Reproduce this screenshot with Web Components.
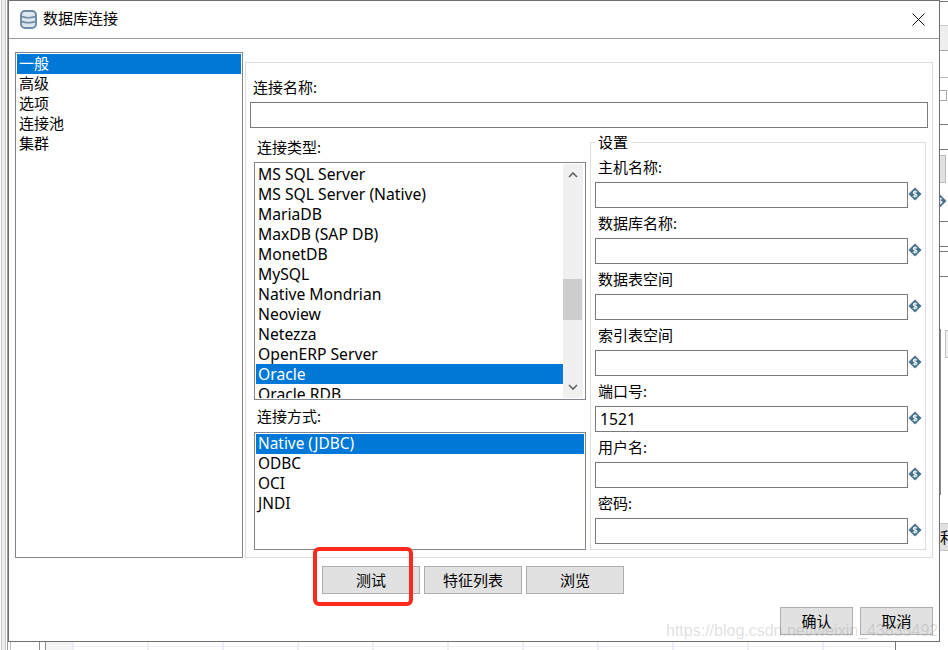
<!DOCTYPE html>
<html lang="zh">
<head>
<meta charset="utf-8">
<title>数据库连接</title>
<style>
html, body { margin: 0; height: 100%; background: #fff; overflow: hidden; }
body { font: 15px "Noto Sans", "Noto Sans CJK SC", sans-serif; color: #000; }
</style>
</head>
<body>
<desk-top>
	<db-dialog heading="数据库连接">
		<list-box slot="nav" raised items="一般,高级,选项,连接池,集群" selected="0"></list-box>
		<text-field slot="name" label="连接名称:"></text-field>
		<list-box slot="types" latin scrollbar selected="10" thumb-top="115" thumb-height="41"
			items="MS SQL Server,MS SQL Server (Native),MariaDB,MaxDB (SAP DB),MonetDB,MySQL,Native Mondrian,Neoview,Netezza,OpenERP Server,Oracle,Oracle RDB"></list-box>
		<list-box slot="methods" latin raised selected="0" items="Native (JDBC),ODBC,OCI,JNDI"></list-box>
		<param-field slot="settings" label="主机名称:"></param-field>
		<param-field slot="settings" label="数据库名称:"></param-field>
		<param-field slot="settings" label="数据表空间"></param-field>
		<param-field slot="settings" label="索引表空间"></param-field>
		<param-field slot="settings" label="端口号:" value="1521"></param-field>
		<param-field slot="settings" label="用户名:"></param-field>
		<param-field slot="settings" label="密码:"></param-field>
		<win-button slot="actions">测试</win-button>
		<win-button slot="actions">特征列表</win-button>
		<win-button slot="actions">浏览</win-button>
		<win-button slot="footer" small>确认</win-button>
		<win-button slot="footer" small>取消</win-button>
	</db-dialog>
</desk-top>

<script>
const FONT = '"Noto Sans", "Noto Sans CJK SC", sans-serif'

const VAR_ICON = `<svg viewBox="0 0 14 14" width="14" height="14" aria-hidden="true">
	<path d="M7 .5 13.5 7 7 13.5 .5 7Z" fill="#44708f"/>
	<path d="M9.1 5.1C8.4 4.3 5.2 4.2 5.2 5.7 5.2 7.2 9 6.8 9 8.3 9 9.8 5.6 9.6 4.9 8.8M7 3.4V10.6" fill="none" stroke="#fff" stroke-width="1.1"/>
</svg>`

class DeskTop extends HTMLElement {
	constructor() {
		super()
		this.attachShadow({ mode: 'open' }).innerHTML = `
			<style>
				:host { display: block; position: relative; width: 948px; height: 650px; overflow: hidden; background: #fff; }
				.bit { position: absolute; }
				.v { width: 1px; }
				.h { left: 940px; width: 8px; height: 1px; }
				.window { position: absolute; left: 8px; top: 0; }
				.clip { left: 940px; top: 523px; width: 8px; height: 28px; overflow: hidden; background: #e1e1e1; border: 1px solid #c4c4c4; border-width: 1px 0; box-sizing: border-box; font: 15px/26px ${FONT}; white-space: nowrap; }
				.grid { left: 72px; top: 642px; width: 823px; height: 8px; background:
					linear-gradient(#eceef6, #eceef6) 0 4px / 100% 1px no-repeat,
					repeating-linear-gradient(90deg, #eceef6 0 2px, transparent 2px 75px); }
			</style>
			<!-- what shows of the main window behind the dialog -->
			<div class="bit" style="left:1px;top:0;width:5px;height:650px;background:#eee;border:1px solid #c8c8c8;border-width:0 1px;box-sizing:border-box"></div>
			<div class="bit v" style="left:7px;top:0;height:650px;background:#9a9a9a"></div>
			<div class="bit v" style="left:10px;top:642px;height:8px;background:#c0c0c0"></div>
			<div class="bit v" style="left:39px;top:642px;height:8px;background:#8a8a8a"></div>
			<div class="bit v" style="left:45px;top:642px;height:8px;background:#8a8a8a"></div>
			<div class="bit" style="left:46px;top:642px;width:26px;height:8px;background:#f4f4f4"></div>
			<div class="bit grid"></div>
			<div class="bit v" style="left:895px;top:642px;height:8px;background:#777"></div>
			<div class="bit h" style="top:1px;background:#777"></div>
			<div class="bit h" style="top:25px;background:#ccc"></div>
			<div class="bit" style="left:940px;top:26px;width:8px;height:24px;background:#eee"></div>
			<div class="bit h" style="top:50px;background:#aaa"></div>
			<div class="bit h" style="top:77px;background:#bbb"></div>
			<div class="bit" style="left:940px;top:90px;width:7px;height:11px;border:1px solid #aaa;border-left:0;box-sizing:border-box"></div>
			<div class="bit h" style="top:124px;background:#777"></div>
			<div class="bit h" style="top:149px;background:#777"></div>
			<div class="bit" style="left:940px;top:155px;width:6px;height:28px;background:#e1e1e1;border:1px solid #bbb;border-left:0;box-sizing:border-box"></div>
			<div class="bit" style="left:933px;top:192px;width:14px;height:14px">${VAR_ICON}</div>
			<div class="bit h" style="top:221px;background:#777"></div>
			<div class="bit h" style="top:246px;background:#777"></div>
			<div class="bit h" style="top:251px;background:#777"></div>
			<div class="bit h" style="top:276px;background:#777"></div>
			<div class="bit" style="left:945px;top:330px;width:3px;height:28px;background:#f0f0f0;border:1px solid #c4c4c4;border-right:0;box-sizing:border-box"></div>
			<div class="bit clip">利</div>
			<div class="window"><slot></slot></div>
			<div class="bit v" style="left:940px;top:329px;height:166px;background:#8a8a8a"></div>
		`
	}
}

class DbDialog extends HTMLElement {
	constructor() {
		super()
		this.attachShadow({ mode: 'open' })
	}

	connectedCallback() {
		this.shadowRoot.innerHTML = `
			<style>
				:host { display: flex; flex-direction: column; box-sizing: border-box; width: 932px; height: 642px; background: #fff; border: 1px solid #6f6f6f; font: 15px ${FONT}; }
				header { display: flex; align-items: center; gap: 6px; box-sizing: border-box; height: 38px; padding: 0 0 0 11px; border-bottom: 1px solid #9b9b9b; flex: none; }
				header .title { flex: 1; margin-top: -5px; }
				header .close { margin-right: 14px; margin-top: -1px; display: block; }
				.main { display: flex; align-items: flex-start; gap: 2px; padding: 13px 0 0 6px; height: 506px; }
				.nav { width: 228px; height: 506px; flex: none; display: flex; }
				.panel { box-sizing: border-box; width: 688px; height: 496px; margin-top: 10px; border: 1px solid #dcdcdc; padding: 15px 4px 0 4px; }
				.columns { display: flex; gap: 4px; margin-top: 10px; }
				.left { width: 332px; margin-left: 4px; flex: none; }
				.cap { display: block; height: 20px; line-height: 18px; padding-left: 3px; }
				.types { display: flex; height: 238px; margin: 4px 0 7px; }
				.methods { display: flex; height: 118px; margin-top: 5px; }
				fieldset { box-sizing: border-box; width: 336px; height: 416px; margin: -4px 0 0; padding: 8px 17px 0 4px; border: 1px solid #dcdcdc; min-width: 0; }
				legend { padding: 0 3px; margin-left: 0; line-height: 16px; height: 16px; }
				.actions { display: flex; gap: 4px; padding: 8px 0 0 313px; }
				.footer { display: flex; gap: 7px; justify-content: flex-end; padding: 13px 6px 0 0; }
				.mark { position: absolute; left: 304px; top: -11px; width: 100px; height: 59px; box-sizing: border-box; border: 4px solid #fb2a1c; border-radius: 6px; pointer-events: none; }
				.bottom { position: relative; }
				.watermark { position: absolute; left: 658px; top: 622px; font: 16px "Liberation Sans", Arial, sans-serif; color: rgba(130, 130, 130, .26); white-space: nowrap; pointer-events: none; }
			</style>
			<header>
				<svg width="17" height="19" viewBox="0 0 17 19" aria-hidden="true" style="margin-top:-1px">
					<rect x="1" y="1" width="15" height="17" rx="4" fill="#dfe7ee" stroke="#6b8ba6" stroke-width="2"/>
					<path d="M2 6.5c3 1.6 10 1.6 13 0M2 11.5c3 1.6 10 1.6 13 0" fill="none" stroke="#6b8ba6" stroke-width="1.6"/>
				</svg>
				<span class="title">${this.getAttribute('heading')}</span>
				<svg class="close" width="13" height="13" viewBox="0 0 13 13" aria-hidden="true">
					<path d="M.5.5 12.5 12.5M12.5.5 .5 12.5" stroke="#111" stroke-width="1" fill="none"/>
				</svg>
			</header>
			<div class="main">
				<div class="nav"><slot name="nav"></slot></div>
				<div class="panel">
					<slot name="name"></slot>
					<div class="columns">
						<div class="left">
							<span class="cap">连接类型:</span>
							<div class="types"><slot name="types"></slot></div>
							<span class="cap">连接方式:</span>
							<div class="methods"><slot name="methods"></slot></div>
						</div>
						<fieldset>
							<legend>设置</legend>
							<slot name="settings"></slot>
						</fieldset>
					</div>
				</div>
			</div>
			<div class="bottom">
				<div class="actions"><slot name="actions"></slot></div>
				<div class="mark"></div>
				<div class="footer"><slot name="footer"></slot></div>
			</div>
			<div class="watermark">https://blog.csdn.net/weixin_43835492</div>
		`
	}
}

class ListBox extends HTMLElement {
	constructor() {
		super()
		this.attachShadow({ mode: 'open' })
	}

	connectedCallback() {
		const items = this.getAttribute('items').split(',')
		const selected = Number(this.getAttribute('selected'))
		const hasBar = this.hasAttribute('scrollbar')
		const bar = hasBar ? `
			<div class="bar">
				<svg class="up" width="10" height="6" viewBox="0 0 10 6"><path d="M1 5 5 1 9 5" fill="none" stroke="#606060" stroke-width="1.6"/></svg>
				<div class="thumb" style="top:${this.getAttribute('thumb-top')}px;height:${this.getAttribute('thumb-height')}px"></div>
				<svg class="down" width="10" height="6" viewBox="0 0 10 6"><path d="M1 1 5 5 9 1" fill="none" stroke="#606060" stroke-width="1.6"/></svg>
			</div>` : ''
		this.shadowRoot.innerHTML = `
			<style>
				:host { display: flex; flex: 1; box-sizing: border-box; border: 1px solid #80868d; background: #fff; padding: 1px; overflow: hidden; min-width: 0; }
				:host([latin]) { font-size: 15.7px; }
				:host([latin][raised]) { font-size: 15.4px; }
				ul { list-style: none; margin: 0; padding: 0; flex: 1; overflow: hidden; min-width: 0; }
				li { height: 20px; line-height: 20px; padding-left: 2px; white-space: nowrap; }
				:host([raised]) li { line-height: 19px; }
				li.on { background: #0078d7; color: #fff; }
				.bar { position: relative; width: 20px; flex: none; background: #f0f0f0; margin-right: 1px; }
				.bar svg { position: absolute; left: 5px; }
				.up { top: 8px; }
				.down { bottom: 8px; }
				.thumb { position: absolute; left: 0; width: 19px; background: #cdcdcd; }
			</style>
			<ul>${items.map((text, i) => `<li class="${i === selected ? 'on' : ''}">${text}</li>`).join('')}</ul>
			${bar}
		`
	}
}

class TextField extends HTMLElement {
	constructor() {
		super()
		this.attachShadow({ mode: 'open' })
	}

	connectedCallback() {
		this.shadowRoot.innerHTML = `
			<style>
				:host { display: block; }
				label { display: block; height: 20px; line-height: 18px; padding-left: 3px; margin-bottom: 4px; }
				.box { box-sizing: border-box; height: 26px; border: 1px solid #7a7a7a; background: #fff; }
			</style>
			<label>${this.getAttribute('label')}</label>
			<div class="box"></div>
		`
	}
}

class ParamField extends HTMLElement {
	constructor() {
		super()
		this.attachShadow({ mode: 'open' })
	}

	connectedCallback() {
		this.shadowRoot.innerHTML = `
			<style>
				:host { display: block; height: 56px; }
				label { display: block; height: 20px; line-height: 18px; padding-left: 3px; margin-bottom: 4px; }
				.row { display: flex; align-items: center; }
				.box { box-sizing: border-box; width: 313px; height: 26px; line-height: 24px; padding-left: 4px; font-size: 15.7px; border: 1px solid #7a7a7a; background: #fff; flex: none; }
				svg { flex: none; margin-top: -2px; }
			</style>
			<label>${this.getAttribute('label')}</label>
			<div class="row">
				<div class="box">${this.getAttribute('value') || ''}</div>
				${VAR_ICON}
			</div>
		`
	}
}

class WinButton extends HTMLElement {
	constructor() {
		super()
		this.attachShadow({ mode: 'open' }).innerHTML = `
			<style>
				:host { display: flex; align-items: center; justify-content: center; box-sizing: border-box; width: 98px; height: 28px; padding-bottom: 2px; background: #e1e1e1; border: 1px solid #adadad; }
				:host([small]) { width: 73px; }
			</style>
			<slot></slot>
		`
	}
}

customElements.define('desk-top', DeskTop)
customElements.define('db-dialog', DbDialog)
customElements.define('list-box', ListBox)
customElements.define('text-field', TextField)
customElements.define('param-field', ParamField)
customElements.define('win-button', WinButton)
</script>
</body>
</html>
